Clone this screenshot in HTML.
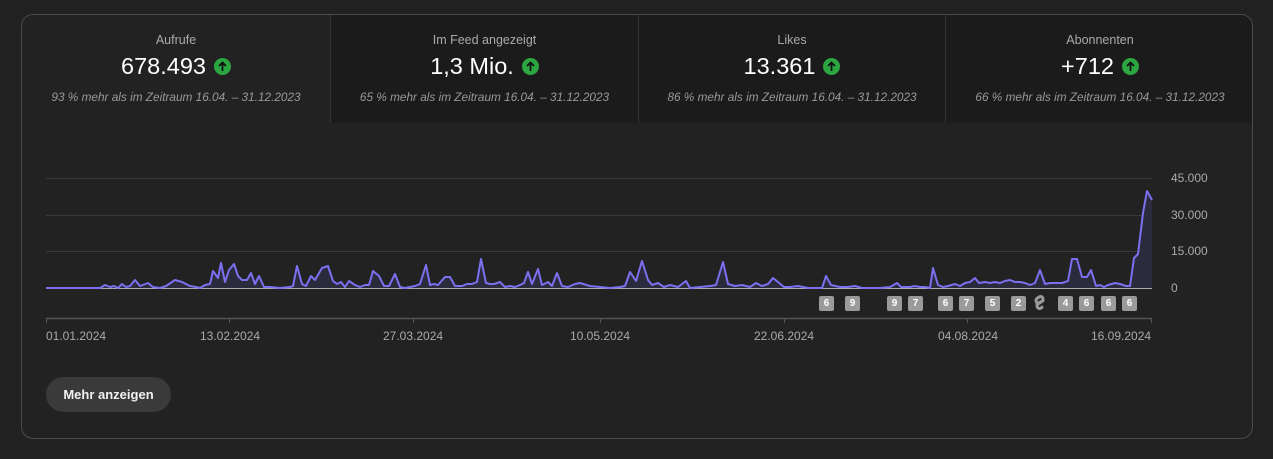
<!DOCTYPE html>
<html><head><meta charset="utf-8"><style>
*{margin:0;padding:0;box-sizing:border-box}
body{width:1273px;height:459px;background:#212121;font-family:"Liberation Sans",sans-serif;position:relative;overflow:hidden}
.card{position:absolute;left:21px;top:14px;width:1232px;height:425px;border:1px solid #4a4a4a;border-radius:12px;overflow:hidden;background:#222}
.tab{position:absolute;top:0;height:108px;text-align:center;background:#1b1b1b;border-left:1px solid #333}
.tab.sel{background:#222;border-left:none}
.t{position:absolute;top:18px;left:0;right:0;font-size:12.5px;color:#aaa}
.v{position:absolute;top:38px;left:0;right:0;font-size:23.5px;color:#fff;display:flex;justify-content:center;align-items:center;gap:8px}
.ic{width:17px;height:17px;border-radius:50%;background:#2ba640;display:inline-block;position:relative}
.ic svg{position:absolute;left:3px;top:3px}
.s{position:absolute;top:75px;left:0;right:0;font-size:11.8px;color:#999;font-style:italic}
.lbl{position:absolute;font-size:12px;color:#aaa}
.b{position:absolute;top:296px;width:15px;height:15px;background:#9a9a9a;border-radius:2px;color:#fff;font-size:10px;font-weight:bold;text-align:center;line-height:15px}
.btn{position:absolute;left:46px;top:377px;width:125px;height:35px;border-radius:18px;background:#3a3a3a;color:#f1f1f1;font-size:13px;font-weight:bold;text-align:center;line-height:35px}
</style></head><body>
<div class="card">
 <div class="tab sel" style="left:0;width:308px"><div class="t">Aufrufe</div><div class="v">678.493 <span class="ic"><svg width="11" height="11" viewBox="0 0 11 11"><path d="M5.5 10V1.5M2 5l3.5-3.5L9 5" stroke="#111" stroke-width="1.8" fill="none"/></svg></span></div><div class="s">93 % mehr als im Zeitraum 16.04. – 31.12.2023</div></div>
 <div class="tab" style="left:308px;width:308px"><div class="t">Im Feed angezeigt</div><div class="v">1,3 Mio. <span class="ic"><svg width="11" height="11" viewBox="0 0 11 11"><path d="M5.5 10V1.5M2 5l3.5-3.5L9 5" stroke="#111" stroke-width="1.8" fill="none"/></svg></span></div><div class="s">65 % mehr als im Zeitraum 16.04. – 31.12.2023</div></div>
 <div class="tab" style="left:616px;width:307px"><div class="t">Likes</div><div class="v">13.361 <span class="ic"><svg width="11" height="11" viewBox="0 0 11 11"><path d="M5.5 10V1.5M2 5l3.5-3.5L9 5" stroke="#111" stroke-width="1.8" fill="none"/></svg></span></div><div class="s">86 % mehr als im Zeitraum 16.04. – 31.12.2023</div></div>
 <div class="tab" style="left:923px;width:309px"><div class="t">Abonnenten</div><div class="v">+712 <span class="ic"><svg width="11" height="11" viewBox="0 0 11 11"><path d="M5.5 10V1.5M2 5l3.5-3.5L9 5" stroke="#111" stroke-width="1.8" fill="none"/></svg></span></div><div class="s">66 % mehr als im Zeitraum 16.04. – 31.12.2023</div></div>
</div>
<svg style="position:absolute;left:0;top:0" width="1273" height="459">
 <g stroke="#383838" stroke-width="1"><line x1="46" y1="178.5" x2="1152" y2="178.5"/><line x1="46" y1="215.5" x2="1152" y2="215.5"/><line x1="46" y1="251.5" x2="1152" y2="251.5"/></g>
 <polygon fill="#2c2b3e" points="46,288 100,288 105,285 110,287 114,286 118,288 122,284 126,287 130,286 135,280 140,286 148,283 153,287 160,288 166,286 175,280 182,282 190,286 196,287 200,288 205,285 210,284 213,271 218,278 221,263 225,282 229,270 234,264 238,276 242,280 247,280 251,273 255,284 259,276 264,287 270,287 280,288 290,287 293,286 297,266 302,284 306,286 311,276 315,280 322,268 328,266 333,281 337,284 341,282 345,287 349,281 355,285 360,287 365,285 369,285 373,271 379,276 384,286 389,286 395,274 400,287 405,288 410,287 415,286 420,284 426,265 430,285 434,284 438,285 445,277 450,277 455,286 462,286 467,284 472,284 477,282 481,259 486,283 490,284 494,284 500,282 505,287 510,286 515,287 520,285 524,283 528,272 532,284 538,269 542,285 548,282 552,286 557,273 562,286 568,287 575,284 580,283 590,286 600,287 610,288 620,287 625,286 630,272 636,281 642,261 648,280 652,285 658,283 664,287 670,285 678,287 686,281 690,288 700,287 710,286 716,285 723,262 728,284 735,286 742,285 750,287 756,283 762,286 768,284 773,278 778,282 784,287 790,287 798,286 808,288 822,288 826,276 831,285 840,287 848,287 855,286 862,288 870,288 880,288 890,287 897,283 901,287 905,287 910,287 915,286 920,287 925,287 930,288 933,268 938,285 943,287 948,286 955,284 960,286 965,283 970,282 975,278 979,283 985,282 990,283 995,282 1000,283 1005,281 1010,280 1015,282 1020,282 1025,283 1030,285 1035,283 1040,270 1045,284 1050,283 1055,283 1062,283 1068,281 1072,259 1077,259 1082,277 1087,277 1091,270 1096,286 1100,285 1104,287 1108,285 1115,283 1120,284 1126,286 1130,286 1134,258 1138,254 1143,213 1147,191 1152,200 1152,288"/>
 <line x1="46" y1="288.5" x2="1152" y2="288.5" stroke="#aaa" stroke-width="1"/>
 <polyline fill="none" stroke="#7b70f0" stroke-width="2" stroke-linejoin="round" points="46,288 100,288 105,285 110,287 114,286 118,288 122,284 126,287 130,286 135,280 140,286 148,283 153,287 160,288 166,286 175,280 182,282 190,286 196,287 200,288 205,285 210,284 213,271 218,278 221,263 225,282 229,270 234,264 238,276 242,280 247,280 251,273 255,284 259,276 264,287 270,287 280,288 290,287 293,286 297,266 302,284 306,286 311,276 315,280 322,268 328,266 333,281 337,284 341,282 345,287 349,281 355,285 360,287 365,285 369,285 373,271 379,276 384,286 389,286 395,274 400,287 405,288 410,287 415,286 420,284 426,265 430,285 434,284 438,285 445,277 450,277 455,286 462,286 467,284 472,284 477,282 481,259 486,283 490,284 494,284 500,282 505,287 510,286 515,287 520,285 524,283 528,272 532,284 538,269 542,285 548,282 552,286 557,273 562,286 568,287 575,284 580,283 590,286 600,287 610,288 620,287 625,286 630,272 636,281 642,261 648,280 652,285 658,283 664,287 670,285 678,287 686,281 690,288 700,287 710,286 716,285 723,262 728,284 735,286 742,285 750,287 756,283 762,286 768,284 773,278 778,282 784,287 790,287 798,286 808,288 822,288 826,276 831,285 840,287 848,287 855,286 862,288 870,288 880,288 890,287 897,283 901,287 905,287 910,287 915,286 920,287 925,287 930,288 933,268 938,285 943,287 948,286 955,284 960,286 965,283 970,282 975,278 979,283 985,282 990,283 995,282 1000,283 1005,281 1010,280 1015,282 1020,282 1025,283 1030,285 1035,283 1040,270 1045,284 1050,283 1055,283 1062,283 1068,281 1072,259 1077,259 1082,277 1087,277 1091,270 1096,286 1100,285 1104,287 1108,285 1115,283 1120,284 1126,286 1130,286 1134,258 1138,254 1143,213 1147,191 1152,200"/>
 <line x1="46" y1="318.5" x2="1152" y2="318.5" stroke="#555" stroke-width="1.5"/>
 <g stroke="#555"><line x1="46.5" y1="318" x2="46.5" y2="323"/><line x1="229.5" y1="318" x2="229.5" y2="323"/><line x1="413.5" y1="318" x2="413.5" y2="323"/><line x1="600.5" y1="318" x2="600.5" y2="323"/><line x1="784.5" y1="318" x2="784.5" y2="323"/><line x1="967.5" y1="318" x2="967.5" y2="323"/><line x1="1151.5" y1="318" x2="1151.5" y2="323"/></g>
 <path d="M1036 305l6-4a2.5 2.5 0 0 0-3-4l-2 1.5a2.5 2.5 0 0 0 3 4M1044 300l-6 4a2.5 2.5 0 0 0 3 4l2-1.5" stroke="#9a9a9a" stroke-width="3" fill="none"/>
</svg>
<div class="lbl" style="left:1171px;top:171px">45.000</div>
<div class="lbl" style="left:1171px;top:208px">30.000</div>
<div class="lbl" style="left:1171px;top:244px">15.000</div>
<div class="lbl" style="left:1171px;top:281px">0</div>
<div class="lbl" style="left:46px;top:329px">01.01.2024</div>
<div class="lbl" style="left:200px;top:329px">13.02.2024</div>
<div class="lbl" style="left:383px;top:329px">27.03.2024</div>
<div class="lbl" style="left:570px;top:329px">10.05.2024</div>
<div class="lbl" style="left:754px;top:329px">22.06.2024</div>
<div class="lbl" style="left:938px;top:329px">04.08.2024</div>
<div class="lbl" style="left:1091px;top:329px">16.09.2024</div>
<div class="b" style="left:819px">6</div><div class="b" style="left:845px">9</div>
<div class="b" style="left:887px">9</div><div class="b" style="left:908px">7</div>
<div class="b" style="left:938px">6</div><div class="b" style="left:959px">7</div>
<div class="b" style="left:985px">5</div><div class="b" style="left:1011px">2</div>
<div class="b" style="left:1058px">4</div><div class="b" style="left:1079px">6</div>
<div class="b" style="left:1101px">6</div><div class="b" style="left:1122px">6</div>
<div class="btn">Mehr anzeigen</div>
</body></html>
